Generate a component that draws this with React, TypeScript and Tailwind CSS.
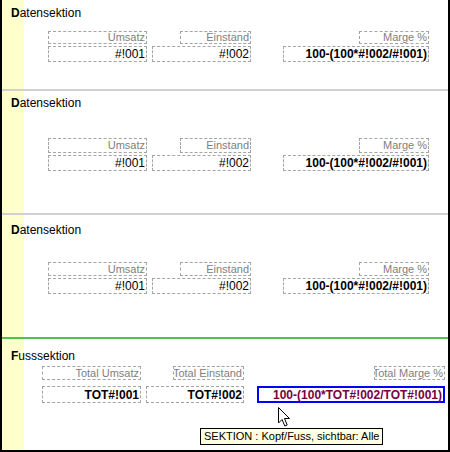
const font = "font-['Liberation_Sans',Arial,sans-serif]";

type Col = {
  label: string;
  value: string;
  width: string;
  labelWidth: string;
  bold?: boolean;
  selected?: boolean;
};

function LabelBox({ text, width, height }: { text: string; width: string; height: string }) {
  return (
    <div
      className={`${width} ${height} border border-dashed border-[#a4a4a4] flex items-center justify-end pr-[1px] text-[11px] leading-none text-[#808080] whitespace-nowrap overflow-hidden`}
    >
      {text}
    </div>
  );
}

function ValueBox({ col, height }: { col: Col; height: string }) {
  const border = col.selected
    ? "border-2 border-solid border-[#0000ff] text-[#7a0040]"
    : "border border-dashed border-[#a4a4a4] text-black";
  return (
    <div
      className={`${col.width} ${height} ${border} flex items-center justify-end pr-[1px] text-[12px] leading-none whitespace-nowrap overflow-visible ${col.bold ? "font-bold" : ""}`}
    >
      {col.value}
    </div>
  );
}

function Title({ first, rest }: { first: string; rest: string }) {
  return (
    <div className="h-[16px] leading-[16px] text-[12px] text-black pl-[9px] whitespace-nowrap">
      <span className="font-bold">{first}</span>
      {rest}
    </div>
  );
}

const dataCols: Col[] = [
  { label: "Umsatz", value: "#!001", width: "w-[99px]", labelWidth: "w-[99px]" },
  { label: "Einstand", value: "#!002", width: "w-[99px]", labelWidth: "w-[71px]" },
  {
    label: "Marge %",
    value: "100-(100*#!002/#!001)",
    width: "w-[146px]",
    labelWidth: "w-[70px]",
    bold: true,
  },
];

const footCols: Col[] = [
  { label: "Total Umsatz", value: "TOT#!001", width: "w-[99px]", labelWidth: "w-[99px]", bold: true },
  { label: "Total Einstand", value: "TOT#!002", width: "w-[98px]", labelWidth: "w-[71px]", bold: true },
  {
    label: "Total Marge %",
    value: "100-(100*TOT#!002/TOT#!001)",
    width: "w-[188px]",
    labelWidth: "w-[71px]",
    bold: true,
    selected: true,
  },
];

function Fields({
  cols,
  gaps,
  labelH,
  valueH,
  rowGap,
}: {
  cols: Col[];
  gaps: string[];
  labelH: string;
  valueH: string;
  rowGap: string;
}) {
  return (
    <div className="flex">
      {cols.map((c, i) => (
        <div key={c.label} className={`flex flex-col items-end ${rowGap} ${gaps[i]}`}>
          <LabelBox text={c.label} width={c.labelWidth} height={labelH} />
          <ValueBox col={c} height={valueH} />
        </div>
      ))}
    </div>
  );
}

function DataSection({
  height,
  pt,
  mt,
  labelH,
}: {
  height: string;
  pt: string;
  mt: string;
  labelH: string;
}) {
  return (
    <div className={`${height} ${pt}`}>
      <Title first="D" rest="atensektion" />
      <div className={mt}>
        <Fields
          cols={dataCols}
          gaps={["ml-[46px]", "ml-[5px]", "ml-[32px]"]}
          labelH={labelH}
          valueH="h-[16px]"
          rowGap="gap-[2px]"
        />
      </div>
    </div>
  );
}

export default function App() {
  return (
    <div
      className={`${font} relative w-[450px] h-[452px] overflow-hidden bg-white border-l-2 border-r-2 border-b-2 border-black bg-[linear-gradient(to_right,#ffffcc_22px,#ffffff_22px)]`}
    >
      <DataSection height="h-[89px]" pt="pt-[5px]" mt="mt-[10px]" labelH="h-[13px]" />
      <div className="h-[2px] bg-[#d0d0d0]" />
      <DataSection height="h-[122px]" pt="pt-[4px]" mt="mt-[27px]" labelH="h-[15px]" />
      <div className="h-[2px] bg-[#d0d0d0]" />
      <DataSection height="h-[122px]" pt="pt-[7px]" mt="mt-[24px]" labelH="h-[14px]" />
      <div className="h-[2px] bg-[#4cc44c]" />
      <div className="pt-[9px]">
        <Title first="F" rest="usssektion" />
        <div className="mt-[2px]">
          <Fields
            cols={footCols}
            gaps={["ml-[40px]", "ml-[5px]", "ml-[13px]"]}
            labelH="h-[14px]"
            valueH="h-[17px]"
            rowGap="gap-[6px]"
          />
        </div>
      </div>

      {/* mouse pointer */}
      <svg
        className="absolute left-[275px] top-[406px]"
        width="14"
        height="22"
        viewBox="0 0 14 22"
      >
        <path
          d="M1.5 1.5 L1.5 17 L5 13.5 L7.8 20 L10.2 19 L7.5 12.5 L12.5 12.5 Z"
          fill="#ffffff"
          stroke="#000000"
          strokeWidth="1"
        />
      </svg>

      {/* tooltip */}
      <div className="absolute left-[198px] top-[428px] h-[17px] px-[3px] border border-black bg-[#ffffe1] text-[11px] leading-[15px] text-black whitespace-nowrap">
        SEKTION : Kopf/Fuss, sichtbar: Alle
      </div>
    </div>
  );
}
